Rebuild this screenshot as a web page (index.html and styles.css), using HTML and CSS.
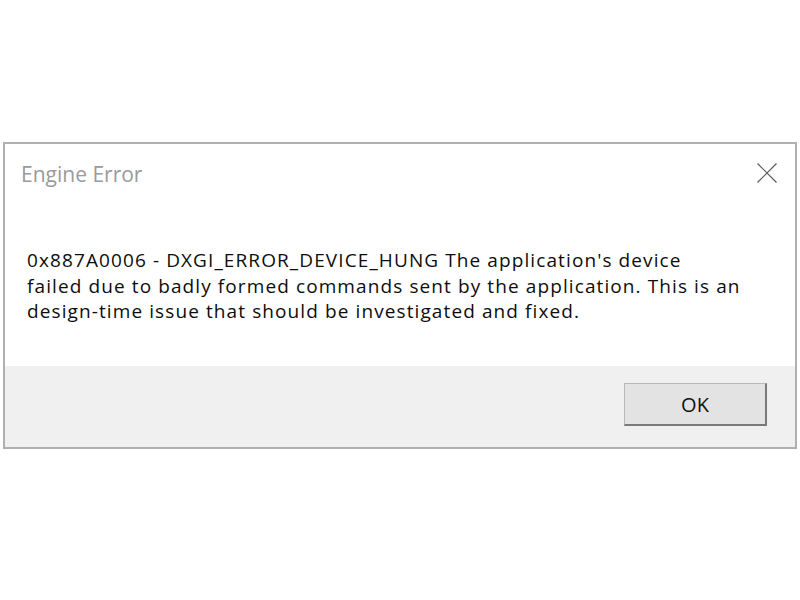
FILE: index.html
```html
<!DOCTYPE html>
<html>
  <head>
    <link rel="stylesheet" href="styles.css">
  </head>
  <body>
    <div id="dialog">
      <div id="body">
        <div id="titlebar">
          <span id="title">Engine Error</span>
          <span id="close">
            <svg width="20" height="20" viewBox="0 0 20 20">
              <path d="M0.5 0.5 L19.5 19.5 M19.5 0.5 L0.5 19.5" stroke="#5a5a5a" stroke-width="1.2" fill="none"/>
            </svg>
          </span>
        </div>
        <p id="message">0x887A0006 - DXGI_ERROR_DEVICE_HUNG The application's device<br>failed due to badly formed commands sent by the application. This is an<br>design-time issue that should be investigated and fixed.</p>
      </div>
      <div id="footer">
        <button id="ok">OK</button>
      </div>
    </div>
  </body>
</html>
```
FILE: styles.css
```css
body {
  margin: 0;
  background: #fff;
  font-family: "Open Sans", "Noto Sans", sans-serif;
}

#dialog {
  margin: 142px 0 0 3px;
  width: 790px;
  border: 2px solid #b0b0b0;
  background: #fff;
}

#body {
  height: 222px;
}

#titlebar {
  display: flex;
  justify-content: space-between;
  align-items: flex-start;
  padding: 16px 18px 0 16px;
}

#title {
  font-size: 21px;
  line-height: 28px;
  color: #9a9a9a;
}

#close {
  display: flex;
  margin-top: 3px;
}

#message {
  margin: 60px 0 0 22px;
  font-size: 19px;
  letter-spacing: 1.1px;
  line-height: 25.5px;
  color: #0d0d0d;
}

#footer {
  height: 81px;
  background: #f0f0f0;
  display: flex;
  justify-content: flex-end;
  align-items: flex-start;
  padding-right: 28px;
}

#ok {
  margin-top: 17px;
  width: 143px;
  height: 43px;
  background: #e3e3e3;
  border-top: 1px solid #b8b8b8;
  border-left: 1px solid #b8b8b8;
  border-right: 2px solid #7a7a7a;
  border-bottom: 2px solid #7a7a7a;
  font-family: "Open Sans", "Noto Sans", sans-serif;
  font-size: 20px;
  color: #111;
  padding: 0;
}
```
